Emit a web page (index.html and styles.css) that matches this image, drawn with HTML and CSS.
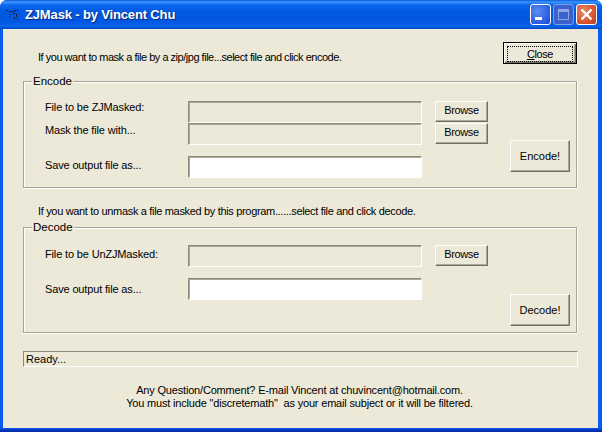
FILE: index.html
```html
<!DOCTYPE html>
<html lang="en">
<head>
    <meta charset="UTF-8">
    <title>ZJMask - by Vincent Chu</title>
    <link rel="stylesheet" href="styles.css">
</head>
<body>
    <div class="window">
        <div class="titlebar">
            <svg class="app-icon" width="14" height="12" viewBox="0 0 14 12">
                <path d="M0 1h2v1H0zM3 2h2v1H3zM6 2h2v1H6zM8 1h2v1H8zM11 0h1v2h-1zM4 5h1v1H4zM7 4h2v1H7zM10 5h1v3h-1zM8 8h1v2H8zM3 7h1v1H3zM11 9h1v2h-1z" fill="#10203a"/>
            </svg>
            <span class="title">ZJMask - by Vincent Chu</span>
            <div class="win-buttons">
                <div class="win-btn">
                    <svg width="21" height="21" viewBox="0 0 21 21"><rect x="5" y="13" width="7" height="3" fill="#fff"/></svg>
                </div>
                <div class="win-btn disabled">
                    <svg width="21" height="21" viewBox="0 0 21 21"><path d="M5 5h11v11H5z M6 8v7h9V8z" fill="#8fa6e6" fill-rule="evenodd"/></svg>
                </div>
                <div class="win-btn close">
                    <svg width="21" height="21" viewBox="0 0 21 21"><path d="M5.5 5.5l10 10M15.5 5.5l-10 10" stroke="#fff" stroke-width="2.4"/></svg>
                </div>
            </div>
        </div>

        <div class="client">
            <div class="top-row">
                <span class="hint">If you want to mask a file by a zip/jpg file...select file and click encode.</span>
                <button class="btn btn-close"><span class="focus"><u>C</u>lose</span></button>
            </div>

            <div class="group group-encode">
                <span class="legend">Encode</span>
                <div class="grid grid-encode">
                    <label class="lbl lbl-first">File to be ZJMasked:</label>
                    <div class="field"></div>
                    <button class="btn btn-browse">Browse</button>

                    <label class="lbl">Mask the file with...</label>
                    <div class="field"></div>
                    <button class="btn btn-browse">Browse</button>

                    <label class="lbl lbl-save r4">Save output file as...</label>
                    <div class="field white r4"></div>
                    <button class="btn btn-action encode-pos">Encode!</button>
                </div>
            </div>

            <div class="hint-row">If you want to unmask a file masked by this program......select file and click decode.</div>

            <div class="group group-decode">
                <span class="legend">Decode</span>
                <div class="grid grid-decode">
                    <label class="lbl lbl-un">File to be UnZJMasked:</label>
                    <div class="field"></div>
                    <button class="btn btn-browse">Browse</button>

                    <label class="lbl lbl-save2 r3">Save output file as...</label>
                    <div class="field white r3"></div>
                    <button class="btn btn-action decode-pos">Decode!</button>
                </div>
            </div>

            <div class="status">Ready...</div>

            <div class="footer">
                Any Question/Comment? E-mail Vincent at chuvincent@hotmail.com.<br>
                You must include "discretemath"&nbsp; as your email subject or it will be filtered.
            </div>
        </div>
    </div>
</body>
</html>
```

FILE: styles.css
```css
html, body {
    margin: 0;
    height: 100%;
    background: #fff;
    overflow: hidden;
}
body {
    font-family: "Liberation Sans", Arial, sans-serif;
    font-size: 11px;
    color: #000;
}
.window {
    height: 432px;
    display: flex;
    flex-direction: column;
    background: linear-gradient(to bottom, #0a5cf0 0, #0a5cf0 428px, #0334c4 430px, #02289c 432px);
    border-radius: 7px 7px 0 0;
    overflow: hidden;
}
.titlebar {
    height: 29px;
    flex: none;
    display: flex;
    align-items: center;
    padding: 0 5px 0 6px;
    background: linear-gradient(to bottom, #0a5bd6 0, #3d95ff 2px, #0a66ee 5px, #0358e0 12px, #0358e3 22px, #0a64ea 26px, #0049c8 29px);
}
.app-icon {
    margin-right: 5px;
}
.title {
    font-weight: bold;
    font-size: 13px;
    letter-spacing: -0.15px;
    color: #fff;
    text-shadow: 1px 1px 1px #0a2a80;
}
.win-buttons {
    margin-left: auto;
    display: flex;
    gap: 2px;
}
.win-btn {
    width: 21px;
    height: 21px;
    box-sizing: border-box;
    border: 1px solid #fff;
    border-radius: 3px;
    overflow: hidden;
    background: radial-gradient(circle at 35% 35%, #5a8cf2, #2a5be0 70%, #1c3fc0);
}
.win-btn svg {
    display: block;
    margin: -1px;
}
.win-btn.disabled {
    border-color: #7f9ee8;
    background: #3a62cf;
}
.win-btn.close {
    background: radial-gradient(circle at 35% 35%, #e98a6c, #d8502c 65%, #b83a18);
}

.client {
    flex: 1;
    margin: 0 4px 4px 3px;
    padding: 0 20px;
    background: #ece9d8;
}
.top-row {
    display: flex;
    align-items: center;
    justify-content: space-between;
    padding-top: 13px;
    height: 22px;
}
.hint {
    padding-left: 15px;
    margin-top: 8px;
    letter-spacing: -0.48px;
}
.hint-row {
    height: 39px;
    line-height: 47px;
    padding-left: 15px;
    letter-spacing: -0.33px;
}

.btn {
    font-family: inherit;
    font-size: 11px;
    color: #000;
    padding: 0;
    box-sizing: border-box;
    background: #ece9d8;
    border: 1px solid;
    border-color: #fff #716f64 #716f64 #fff;
    box-shadow: inset -1px -1px 0 #aca899;
}
.btn-close {
    width: 74px;
    height: 22px;
    margin-right: 1px;
    letter-spacing: -0.4px;
    border: 1px solid #000;
    box-shadow: inset 1px 1px 0 #fff, inset -1px -1px 0 #716f64, inset -2px -2px 0 #aca899;
}
.focus {
    display: block;
    margin: 3px;
    height: 14px;
    line-height: 14px;
    border: 1px dotted #000;
}
.btn-browse {
    width: 53px;
    height: 21px;
    padding-bottom: 3px;
    align-self: start;
    letter-spacing: -0.4px;
}
.btn-action {
    width: 60px;
    height: 32px;
}

.group {
    position: relative;
    margin-right: 1px;
    border: 1px solid #a5a497;
    box-shadow: 0 1px 0 #fff, inset 0 1px 0 #fff, 1px 0 0 #fff, inset 1px 0 0 #fff;
}
.group-encode {
    margin-top: 17px;
    padding: 19px 0 9px;
}
.group-decode {
    padding: 17px 0 6px;
}
.legend {
    position: absolute;
    top: -8px;
    left: 8px;
    padding: 0 1px;
    font-size: 11.5px;
    line-height: 14px;
    background: #ece9d8;
}
.grid {
    display: grid;
    grid-template-columns: 143px 234px 66px 22px 60px;
    padding-left: 21px;
}
.grid-encode {
    grid-template-rows: 22px 22px 11px 22px;
}
.grid-decode {
    grid-template-rows: 22px 11px 22px 26px;
}
.grid .btn-browse {
    grid-column: 3;
    margin-left: 13px;
}
.lbl {
    grid-column: 1;
    line-height: 14px;
    letter-spacing: -0.15px;
    white-space: nowrap;
}
.lbl-first {
    margin-top: -1px;
}
.lbl-save {
    padding-top: 2px;
}
.lbl-un {
    padding-top: 2px;
}
.lbl-save2 {
    padding-top: 4px;
}
.field {
    grid-column: 2;
    box-sizing: border-box;
    border: 1px solid;
    border-color: #8c8a7d #fff #fff #8c8a7d;
    box-shadow: inset 1px 1px 0 #aca899;
}
.field.white {
    background: #fff;
}
.r3 { grid-row: 3; }
.r4 { grid-row: 4; }
.encode-pos {
    grid-column: 5;
    grid-row: 2 / 5;
    align-self: end;
    margin-bottom: 6px;
}
.decode-pos {
    grid-column: 5;
    grid-row: 3 / 5;
    align-self: end;
}

.status {
    margin: 18px 0 0;
    height: 16px;
    line-height: 15px;
    box-sizing: border-box;
    padding-left: 2px;
    border: 1px solid;
    border-color: #8c8a7d #fff #fff #8c8a7d;
}
.footer {
    margin-top: 17px;
    padding-right: 2px;
    line-height: 13px;
    letter-spacing: -0.18px;
    text-align: center;
}
```
